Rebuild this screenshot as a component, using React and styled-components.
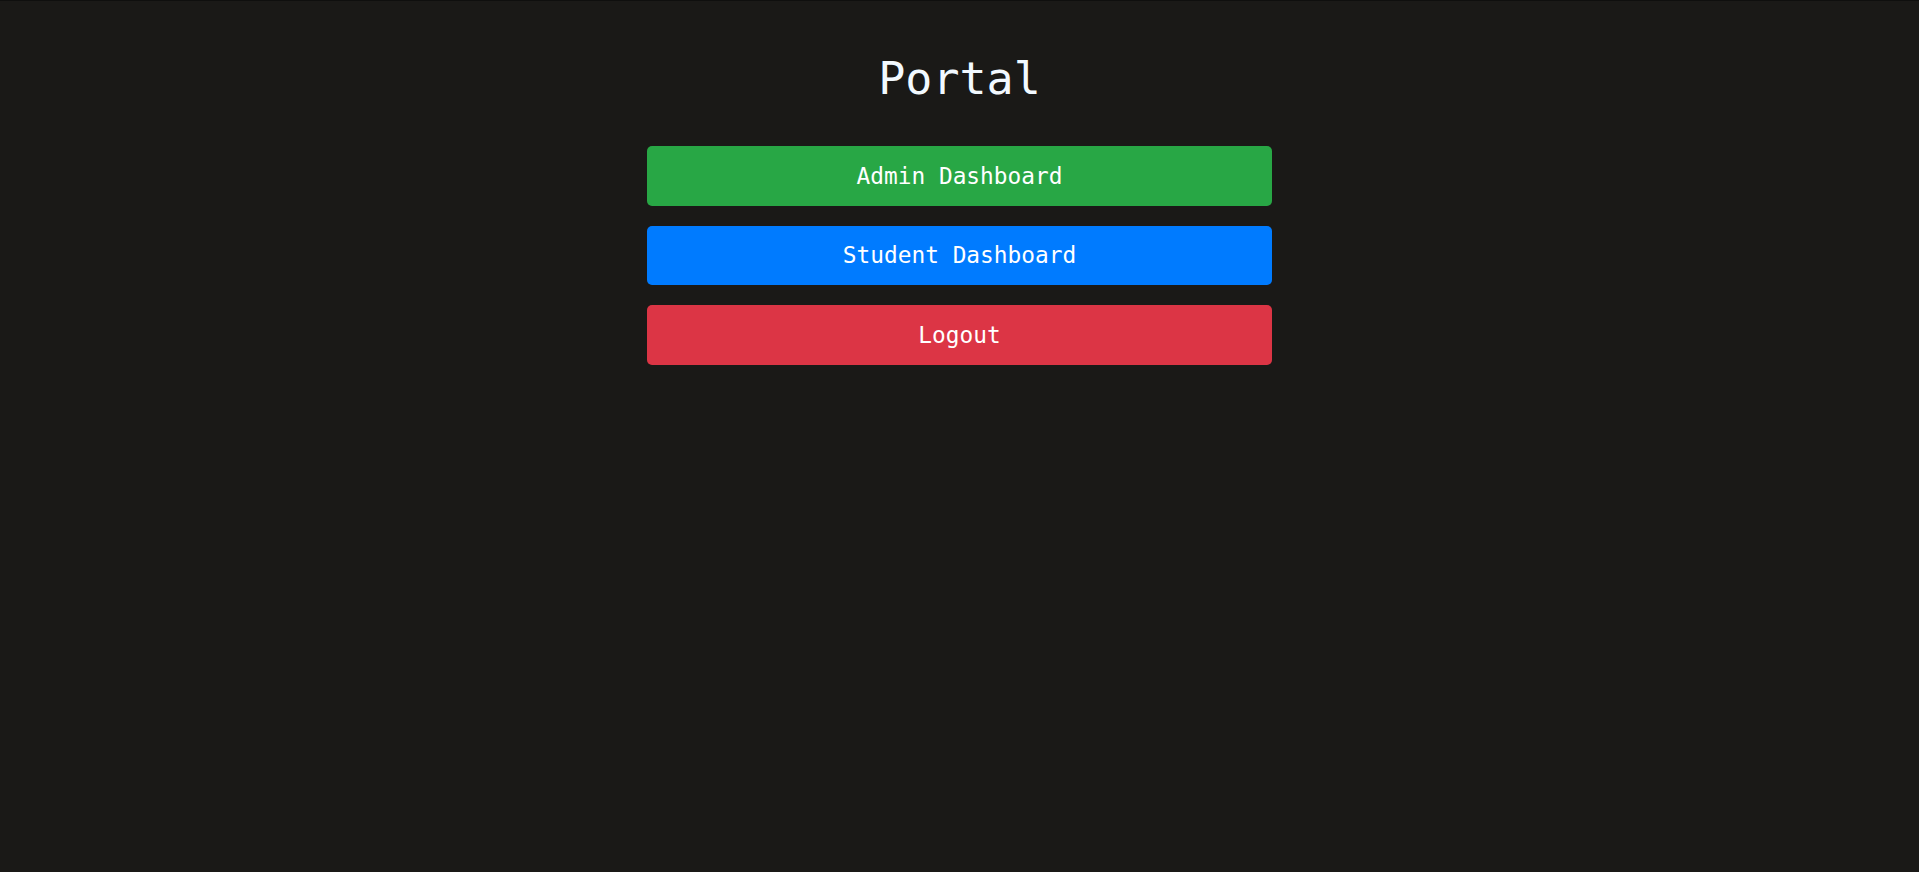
import styled, { createGlobalStyle } from "styled-components";

const GlobalStyle = createGlobalStyle`
  html, body {
    margin: 0;
    padding: 0;
    background-color: #1a1917;
  }
  body {
    font-family: "DejaVu Sans Mono", "Liberation Mono", monospace;
    border-top: 1px solid #0f0f0e;
  }
`;

const Page = styled.div`
  min-height: 871px;
  display: flex;
  flex-direction: column;
  align-items: center;
  padding-top: 52px;
  box-sizing: border-box;
`;

const Title = styled.h1`
  margin: 0 0 41px;
  font-size: 45px;
  font-weight: normal;
  color: #f2f9ff;
  line-height: 52px;
`;

const ButtonList = styled.div`
  display: flex;
  flex-direction: column;
  gap: 20px;
  width: 625px;
`;

const colors = {
  green: "#28a745",
  blue: "#007bff",
  red: "#dc3545",
};

const PortalButton = styled.button`
  display: flex;
  align-items: center;
  justify-content: center;
  height: 59.5px;
  border: none;
  border-radius: 5px;
  background-color: ${({ $variant }) => colors[$variant]};
  color: #ffffff;
  font-family: "DejaVu Sans Mono", "Liberation Mono", monospace;
  font-size: 22.8px;
  cursor: pointer;

  &:hover {
    filter: brightness(0.92);
  }
`;

function App() {
  return (
    <>
      <GlobalStyle />
      <Page>
        <Title>Portal</Title>
        <ButtonList>
          <PortalButton $variant="green">Admin Dashboard</PortalButton>
          <PortalButton $variant="blue">Student Dashboard</PortalButton>
          <PortalButton $variant="red">Logout</PortalButton>
        </ButtonList>
      </Page>
    </>
  );
}

export default App;
